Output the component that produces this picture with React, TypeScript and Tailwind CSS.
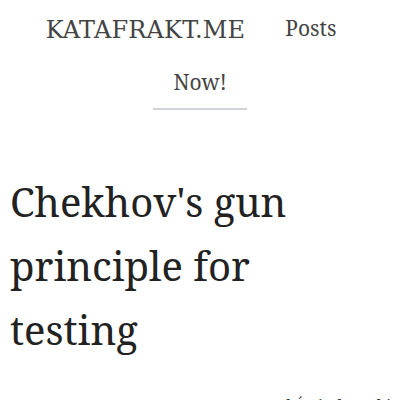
const App = () => {
  return (
    <div className="min-h-screen bg-white overflow-hidden">
      {/* header */}
      <header className="pt-[12px]">
        <div className="flex justify-center items-center pr-[18px]">
          <a className="px-5 font-['DejaVu_Serif',serif] text-[24px] leading-[36px] text-[#444] tracking-[0.2px]">
            KATAFRAKT.ME
          </a>
          <a className="px-5 font-['Noto_Serif',serif] text-[21px] leading-[32px] text-[#444] -mt-[4px]">
            Posts
          </a>
        </div>
        <div className="flex justify-center mt-[18px]">
          <a className="px-5 pb-[10px] border-b-2 border-[#d1d5db] font-['Noto_Serif',serif] text-[21px] leading-[32px] text-[#444]">
            Now!
          </a>
        </div>
      </header>

      <main className="px-[10px] mt-[60px]">
        <h1 className="max-w-[340px] font-['Noto_Serif',serif] text-[40px] leading-[64px] text-[#222]">
          Chekhov's gun principle for testing
        </h1>
        <p className="mt-[32px] pl-[235px] font-['Noto_Serif',serif] text-[16px] leading-[24px] text-[#333] whitespace-nowrap">
          Paweł Świątkowski
        </p>
      </main>
    </div>
  );
};

export default App;
